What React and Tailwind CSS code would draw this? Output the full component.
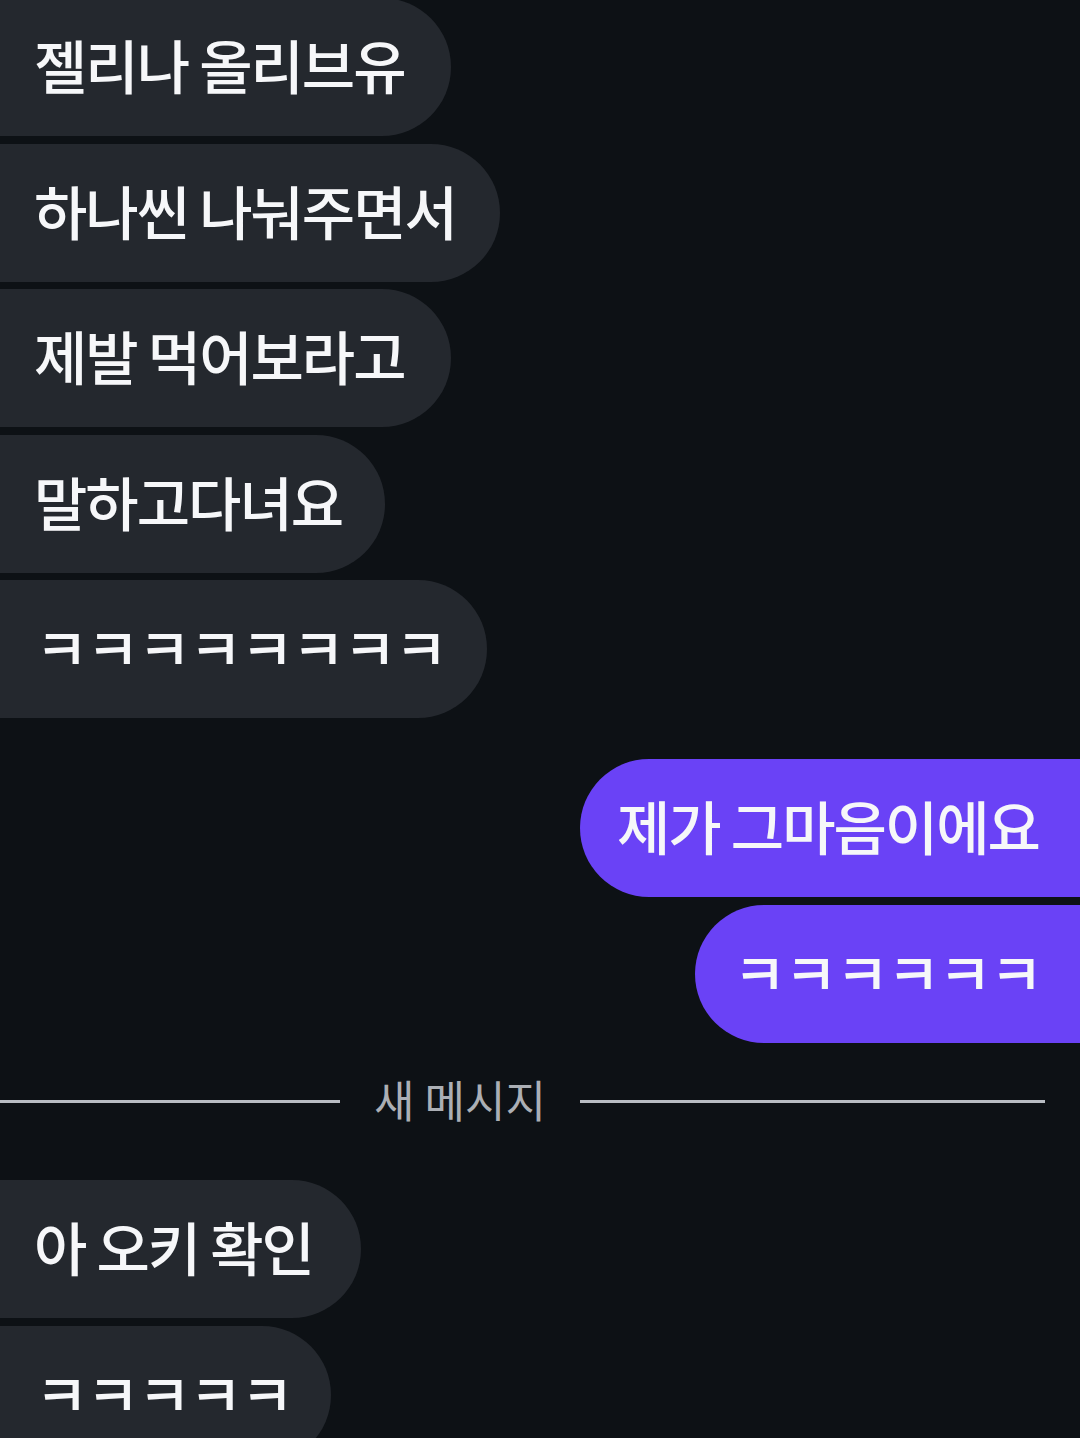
import React from 'react';

const incomingTop = [
  { text: '젤리나 올리브유', w: 'w-[463px]' },
  { text: '하나씬 나눠주면서', w: 'w-[512px]' },
  { text: '제발 먹어보라고', w: 'w-[463px]' },
  { text: '말하고다녀요', w: 'w-[397px]' },
  { text: 'ㅋㅋㅋㅋㅋㅋㅋㅋ', w: 'w-[499px]', laugh: true },
];

const outgoing = [
  { text: '제가 그마음이에요', w: 'w-[502px]' },
  { text: 'ㅋㅋㅋㅋㅋㅋ', w: 'w-[387px]', laugh: true },
];

const incomingBottom = [
  { text: '아 오키 확인', w: 'w-[373px]' },
  { text: 'ㅋㅋㅋㅋㅋ', w: 'w-[343px]', laugh: true },
];

function Bubble({ text, w, laugh, mine }) {
  return (
    <div
      className={
        'flex h-[138px] shrink-0 items-center whitespace-nowrap pb-[6px] text-[58px] font-medium leading-none text-[#f6f7f9] ' +
        w +
        (mine
          ? ' self-end -mr-[2px] rounded-l-full rounded-r-[30px] bg-[#6a42f6]'
          : ' -ml-[12px] rounded-r-full rounded-l-[26px] bg-[#24282e]') +
        (laugh ? ' tracking-[-2px]' : ' tracking-[-2px]') +
        (mine ? (laugh ? ' pl-[38px]' : ' pl-[37px]') : laugh ? ' pl-[47px]' : ' pl-[46px]')
      }
    >
      {text}
    </div>
  );
}

export default function App() {
  return (
    <div
      className="flex min-h-[1438px] w-[1080px] flex-col overflow-hidden bg-[#0d1115]"
      style={{ fontFamily: '"Noto Sans CJK KR", "Noto Sans", sans-serif' }}
    >
      <div className="-mt-[2px] flex flex-col gap-[7.5px]">
        {incomingTop.map((m) => (
          <Bubble key={m.text} {...m} />
        ))}
      </div>

      <div className="mt-[41px] flex flex-col gap-[8px]">
        {outgoing.map((m) => (
          <Bubble key={m.text} {...m} mine />
        ))}
      </div>

      <div className="mt-[28px] flex h-[60px] items-center pr-[35px]">
        <div className="h-[3px] w-[340px] bg-[#b9bdc3]" />
        <span className="mx-auto pb-[4px] text-[44px] font-normal tracking-[0px] text-[#abafb5]">
          새 메시지
        </span>
        <div className="h-[3px] w-[465px] bg-[#b9bdc3]" />
      </div>

      <div className="mt-[49px] flex flex-col gap-[8px]">
        {incomingBottom.map((m) => (
          <Bubble key={m.text} {...m} />
        ))}
      </div>
    </div>
  );
}
